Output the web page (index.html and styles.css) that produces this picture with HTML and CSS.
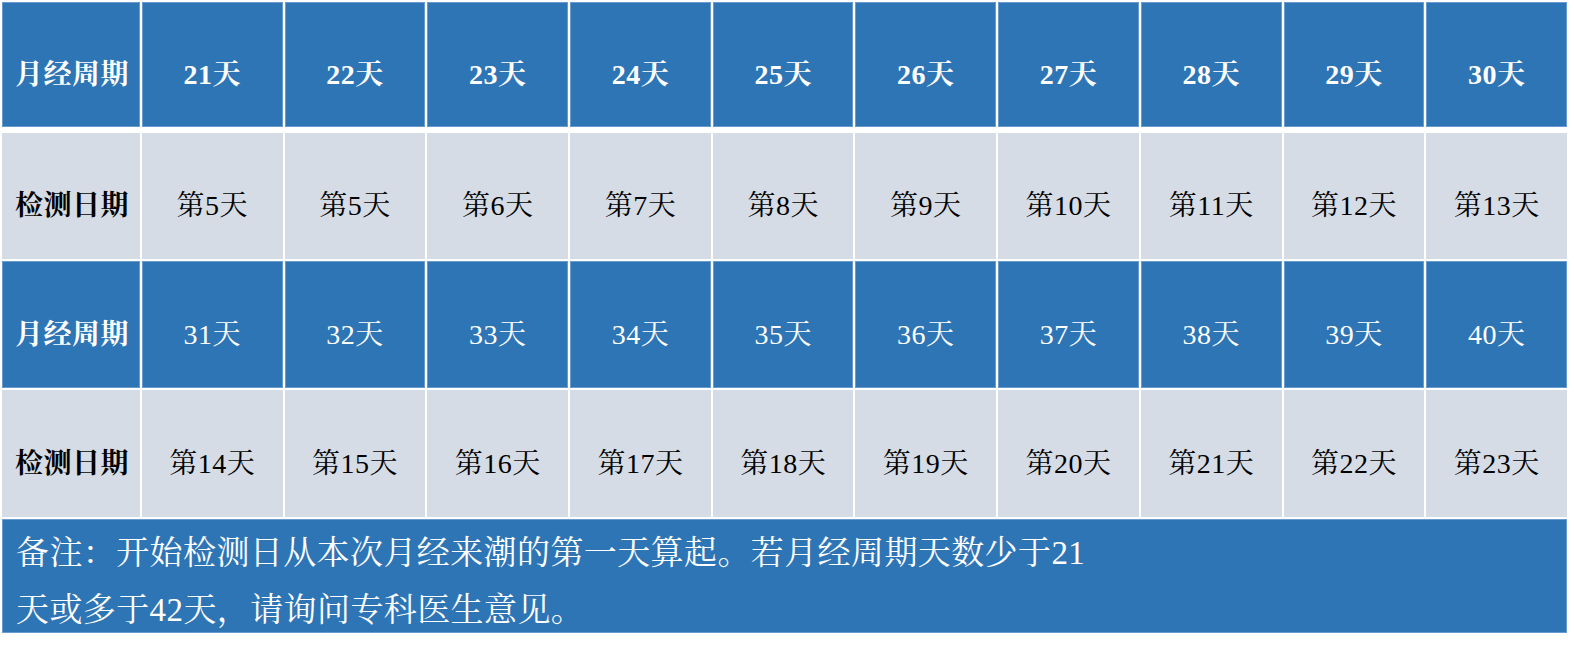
FILE: index.html
```html
<!DOCTYPE html>
<html lang="zh-CN">
<head>
<meta charset="utf-8">
<title>月经周期检测日期</title>
<link rel="stylesheet" href="styles.css">
</head>
<body>
<div class="table">
  <div class="cell blue head label">月经周期</div>
  <div class="cell blue head bold">21天</div>
  <div class="cell blue head bold">22天</div>
  <div class="cell blue head bold">23天</div>
  <div class="cell blue head bold">24天</div>
  <div class="cell blue head bold">25天</div>
  <div class="cell blue head bold">26天</div>
  <div class="cell blue head bold">27天</div>
  <div class="cell blue head bold">28天</div>
  <div class="cell blue head bold">29天</div>
  <div class="cell blue head bold">30天</div>

  <div class="cell gray label">检测日期</div>
  <div class="cell gray">第5天</div>
  <div class="cell gray">第5天</div>
  <div class="cell gray">第6天</div>
  <div class="cell gray">第7天</div>
  <div class="cell gray">第8天</div>
  <div class="cell gray">第9天</div>
  <div class="cell gray">第10天</div>
  <div class="cell gray">第11天</div>
  <div class="cell gray">第12天</div>
  <div class="cell gray">第13天</div>

  <div class="cell blue label">月经周期</div>
  <div class="cell blue">31天</div>
  <div class="cell blue">32天</div>
  <div class="cell blue">33天</div>
  <div class="cell blue">34天</div>
  <div class="cell blue">35天</div>
  <div class="cell blue">36天</div>
  <div class="cell blue">37天</div>
  <div class="cell blue">38天</div>
  <div class="cell blue">39天</div>
  <div class="cell blue">40天</div>

  <div class="cell gray label">检测日期</div>
  <div class="cell gray">第14天</div>
  <div class="cell gray">第15天</div>
  <div class="cell gray">第16天</div>
  <div class="cell gray">第17天</div>
  <div class="cell gray">第18天</div>
  <div class="cell gray">第19天</div>
  <div class="cell gray">第20天</div>
  <div class="cell gray">第21天</div>
  <div class="cell gray">第22天</div>
  <div class="cell gray">第23天</div>

  <div class="note">备注：开始检测日从本次月经来潮的第一天算起。若月经周期天数少于21<br>天或多于42天，请询问专科医生意见。</div>
</div>
</body>
</html>
```

FILE: styles.css
```css
html, body {
  margin: 0;
  padding: 0;
  background: #ffffff;
}

body {
  padding: 2px 0 0 2px;
  font-family: "Liberation Serif", "Noto Serif CJK SC", "Noto Sans CJK SC", serif;
}

.table {
  width: 1565px;
  display: grid;
  grid-template-columns: 138px repeat(10, 1fr);
  grid-template-rows: 129px 126px 127px 127px 114px;
  column-gap: 2px;
  row-gap: 2px;
  background: #ffffff;
}

.cell {
  display: flex;
  align-items: center;
  justify-content: center;
  font-size: 28px;
  padding-top: 14px;
  box-sizing: border-box;
  white-space: nowrap;
  letter-spacing: 0.5px;
}

.blue {
  background: #2e75b6;
  color: #ffffff;
  box-shadow: inset 0 0 0 1px #6a9bd0;
}

.gray {
  background: #d6dce5;
  color: #000000;
}

.head {
  margin-bottom: 4px;
}

.bold,
.label {
  font-weight: bold;
}

.label {
  justify-content: flex-start;
  padding-left: 13px;
}

.note {
  grid-column: 1 / -1;
  background: #2e75b6;
  color: #ffffff;
  box-shadow: inset 0 0 0 1px #6a9bd0;
  font-size: 33px;
  letter-spacing: 0.4px;
  line-height: 57px;
  padding: 6px 0 0 14px;
  box-sizing: border-box;
}
```
